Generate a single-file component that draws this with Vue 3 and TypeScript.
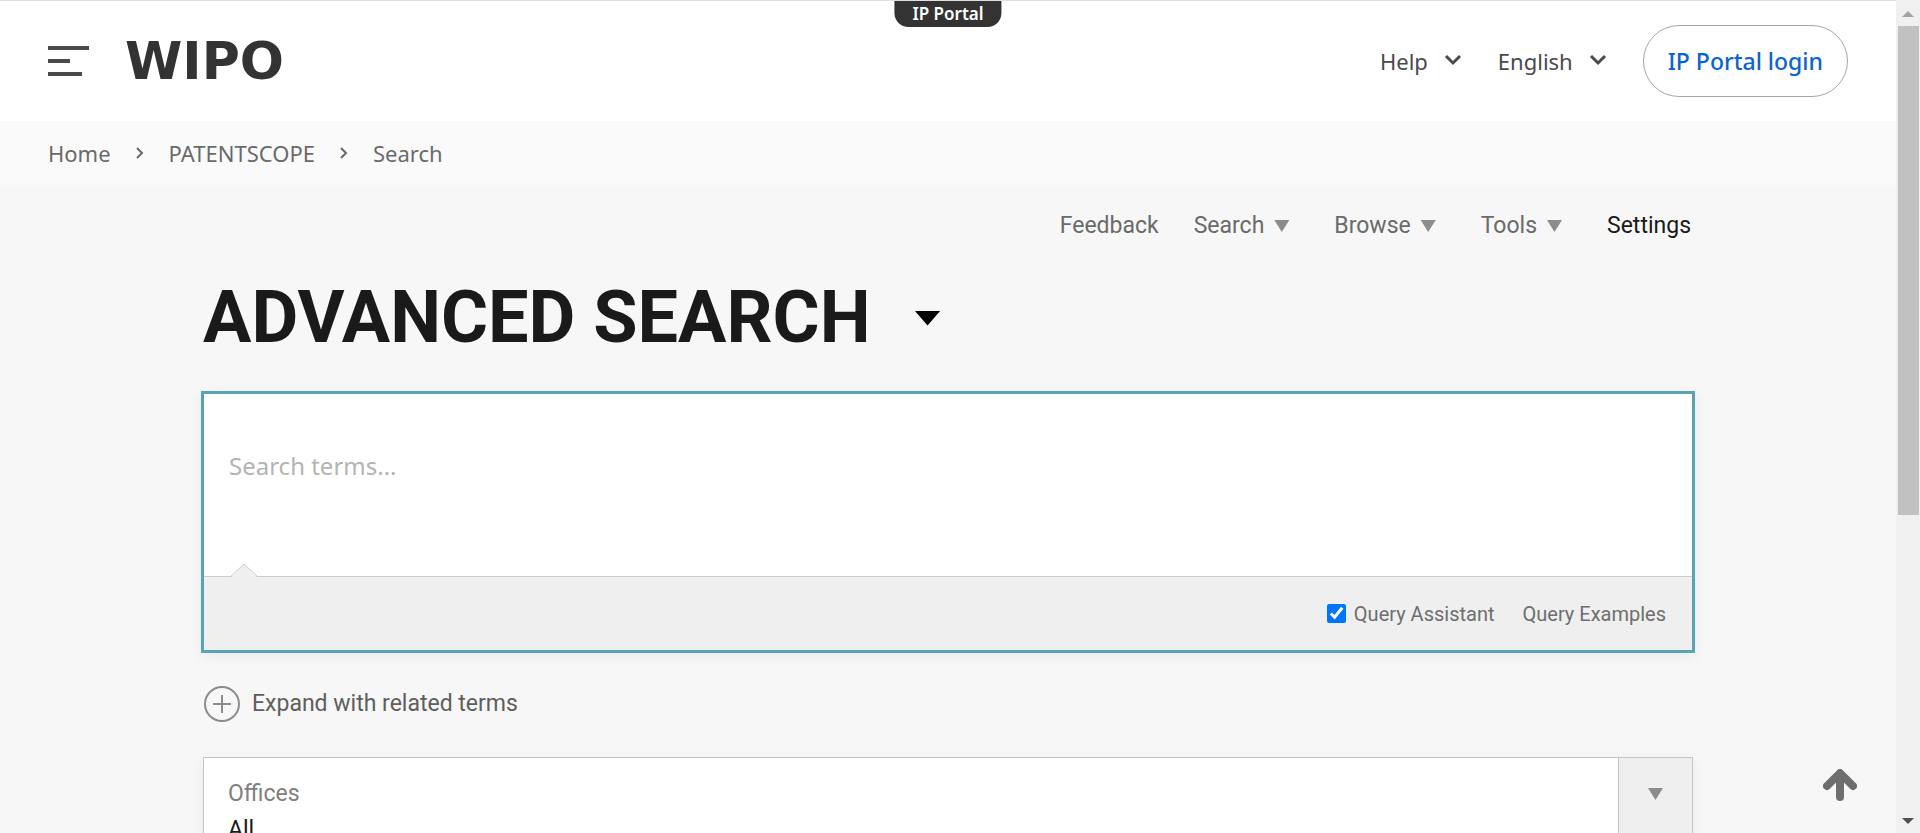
<script setup lang="ts">
import { ref } from 'vue'

interface NavItem {
  label: string
  menu: boolean
  active?: boolean
}

const crumbs: string[] = ['Home', 'PATENTSCOPE', 'Search']
const headerMenus: string[] = ['Help', 'English']
const navItems: NavItem[] = [
  { label: 'Feedback', menu: false },
  { label: 'Search', menu: true },
  { label: 'Browse', menu: true },
  { label: 'Tools', menu: true },
  { label: 'Settings', menu: false, active: true },
]

const query = ref('')
const assistant = ref(true)
const office = ref('All')
</script>

<template>
  <div class="page">
    <div class="content">
      <header class="topbar">
        <button class="menu-button" type="button" aria-label="Menu">
          <svg width="41" height="30" viewBox="0 0 41 30" fill="#4a4a4a">
            <rect x="0" y="0" width="41" height="4" />
            <rect x="0" y="13" width="22" height="4" />
            <rect x="0" y="26" width="34" height="4" />
          </svg>
        </button>
        <a class="logo" href="#">WIPO</a>
        <div class="top-actions">
          <button v-for="item in headerMenus" :key="item" class="top-menu" type="button">
            <span>{{ item }}</span>
            <svg width="18" height="14" viewBox="0 0 18 14">
              <path d="M2 2 L9 9 L16 2" fill="none" stroke="#4a4a4a" stroke-width="3" />
            </svg>
          </button>
          <button class="login" type="button">IP Portal login</button>
        </div>
        <a class="portal-tab" href="#">IP Portal</a>
      </header>

      <nav class="breadcrumbs" aria-label="Breadcrumb">
        <template v-for="(crumb, i) in crumbs" :key="crumb">
          <svg v-if="i > 0" width="10" height="12" viewBox="0 0 10 12">
            <path d="M2 1 L7 6 L2 11" fill="none" stroke="#6a6a6a" stroke-width="2" />
          </svg>
          <a href="#">{{ crumb }}</a>
        </template>
      </nav>

      <main class="main">
        <nav class="subnav" aria-label="PATENTSCOPE">
          <template v-for="item in navItems" :key="item.label">
            <button v-if="item.menu" class="nav-item has-menu" type="button">
              {{ item.label }}<span class="triangle"></span>
            </button>
            <a v-else class="nav-item" :class="{ active: item.active }" href="#">{{ item.label }}</a>
          </template>
        </nav>

        <div class="title-row">
          <h1>ADVANCED SEARCH</h1>
          <button class="title-button" type="button" aria-label="Choose search type">
            <span class="triangle large"></span>
          </button>
        </div>

        <form class="search-box" @submit.prevent>
          <textarea v-model="query" placeholder="Search terms..." aria-label="Search terms"></textarea>
          <div class="search-options">
            <svg class="notch" width="28" height="15" viewBox="0 0 28 15">
              <path d="M0 15 L14 1 L28 15 Z" fill="#efefef" />
              <path d="M0 14 L14 1 L28 14" fill="none" stroke="#cccccc" />
            </svg>
            <input id="assistant" v-model="assistant" type="checkbox" />
            <label for="assistant">Query Assistant</label>
            <a href="#">Query Examples</a>
          </div>
        </form>

        <button class="expand" type="button">
          <svg width="36" height="36" viewBox="0 0 36 36" fill="none" stroke="#8c8c8c" stroke-width="2">
            <circle cx="18" cy="18" r="17" />
            <path d="M9 18 H27 M18 9 V27" />
          </svg>
          <span>Expand with related terms</span>
        </button>

        <div class="offices">
          <div class="offices-field">
            <label for="offices">Offices</label>
            <select id="offices" v-model="office">
              <option>All</option>
            </select>
          </div>
          <button class="offices-toggle" type="button" aria-label="Show offices">
            <span class="triangle"></span>
          </button>
        </div>
      </main>

      <a class="to-top" href="#" aria-label="Back to top">
        <svg width="34" height="32" viewBox="0 0 34 32">
          <path d="M4 17 L17 4 L30 17 M17 6 V28" fill="none" stroke="#6e6e6e" stroke-width="8" stroke-linecap="round" stroke-linejoin="round" />
        </svg>
      </a>
    </div>

    <div class="scrollbar" aria-hidden="true">
      <svg width="12" height="6" viewBox="0 0 12 6"><path d="M0 6 L6 0 L12 6 Z" fill="#a3a3a3" /></svg>
      <div class="track"><div class="thumb"></div></div>
      <svg width="12" height="6" viewBox="0 0 12 6"><path d="M0 0 L6 6 L12 0 Z" fill="#505050" /></svg>
    </div>
  </div>
</template>

<style>
body {
  margin: 0;
}
</style>

<style scoped>
* {
  box-sizing: border-box;
}

.page {
  display: flex;
  height: 100vh;
  overflow: hidden;
  background: #f7f7f7;
  font-family: "Noto Sans", sans-serif;
  color: #4a4a4a;
}

button {
  padding: 0;
  border: 0;
  background: none;
  color: inherit;
  font: inherit;
  cursor: pointer;
}

a {
  color: inherit;
  text-decoration: none;
}

svg {
  display: block;
}

.content {
  position: relative;
  flex: 1;
  min-width: 0;
  overflow: hidden;
}

.topbar {
  position: relative;
  display: flex;
  align-items: center;
  height: 121px;
  padding: 0 48px;
  border-top: 1px solid #e0e0e0;
  background: #ffffff;
}

.logo {
  margin-left: 36px;
  color: #333333;
  font-family: "DejaVu Sans", sans-serif;
  font-size: 52px;
  font-weight: 700;
  line-height: 56px;
}

.top-actions {
  display: flex;
  align-items: center;
  gap: 36px;
  margin-left: auto;
  font-size: 22px;
  line-height: 32px;
}

.top-menu {
  display: flex;
  align-items: center;
  gap: 16px;
}

.login {
  height: 72px;
  padding: 0 24px;
  border: 1px solid #a6a6a6;
  border-radius: 36px;
  color: #0a64d2;
  font-size: 23px;
  font-weight: 500;
}

.portal-tab {
  position: absolute;
  top: 0;
  left: 50%;
  padding: 0 18px;
  border-radius: 0 0 14px 14px;
  background: #333333;
  color: #ffffff;
  font-size: 17px;
  font-weight: 600;
  line-height: 26px;
  transform: translateX(-50%);
}

.breadcrumbs {
  display: flex;
  align-items: center;
  gap: 24px;
  height: 64px;
  padding: 0 48px;
  background: #fafafa;
  color: #6a6a6a;
  font-size: 22px;
  line-height: 32px;
}

.main {
  max-width: 1494px;
  margin: 0 auto;
  font-family: Roboto, sans-serif;
  font-size: 23px;
  line-height: 32px;
}

.subnav {
  display: flex;
  justify-content: flex-end;
  gap: 35px;
  padding: 25px 4px 0 0;
  color: #6a6a6a;
}

.has-menu {
  display: flex;
  align-items: center;
  gap: 10px;
  padding-right: 10px;
}

.active {
  color: #1a1a1a;
}

.triangle {
  width: 15px;
  height: 12px;
  background: #8c8c8c;
  clip-path: polygon(0 0, 100% 0, 50% 100%);
}

.triangle.large {
  display: block;
  width: 26px;
  height: 15px;
  background: #000000;
}

.title-row {
  display: flex;
  align-items: center;
  gap: 44px;
  padding: 33px 2px 30px;
}

h1 {
  margin: 0;
  color: #1a1a1a;
  font-size: 72px;
  font-weight: 700;
  line-height: 86px;
}

.search-box {
  border: 3px solid #5aa3b7;
  background: #ffffff;
  box-shadow: 0 3px 12px rgba(0, 0, 0, 0.06);
}

textarea {
  display: block;
  width: 100%;
  height: 182px;
  padding: 54px 25px 0;
  border: 0;
  outline: 0;
  background: transparent;
  color: #1a1a1a;
  font-family: "Noto Sans", sans-serif;
  font-size: 24px;
  line-height: 36px;
  resize: none;
}

textarea::placeholder {
  color: #b4b4b4;
  opacity: 1;
}

.search-options {
  position: relative;
  display: flex;
  align-items: center;
  justify-content: flex-end;
  height: 74px;
  padding-right: 26px;
  border-top: 1px solid #cccccc;
  background: #efefef;
  color: #6e6e6e;
  font-size: 20px;
}

.notch {
  position: absolute;
  top: -14px;
  left: 26px;
}

.search-options input {
  width: 19px;
  height: 19px;
  margin: 0 8px 0 0;
  accent-color: #0075ff;
}

.search-options a {
  margin-left: 28px;
}

.expand {
  display: flex;
  align-items: center;
  gap: 12px;
  margin: 33px 3px 35px;
  color: #5e5e5e;
}

.offices {
  display: flex;
  margin: 0 2px;
  border: 1px solid #c4c4c4;
  background: #ffffff;
  box-shadow: 0 3px 12px rgba(0, 0, 0, 0.06);
}

.offices-field {
  flex: 1;
  padding: 20px 24px;
}

.offices-field label {
  display: block;
  color: #808080;
}

select {
  display: block;
  width: 100%;
  margin-top: 4px;
  padding: 0;
  border: 0;
  appearance: none;
  background: transparent;
  color: #1a1a1a;
  font: inherit;
}

.offices-toggle {
  display: flex;
  justify-content: center;
  width: 74px;
  padding-top: 30px;
  border-left: 1px solid #c4c4c4;
  background: #efefef;
}

.to-top {
  position: absolute;
  right: 39px;
  bottom: 32px;
}

.scrollbar {
  display: flex;
  flex-direction: column;
  align-items: center;
  gap: 9px;
  width: 24px;
  padding: 11px 0 9px;
  background: #f0f0f0;
}

.track {
  flex: 1;
  width: 21px;
}

.thumb {
  height: 62.5%;
  background: #c1c1c1;
}
</style>
